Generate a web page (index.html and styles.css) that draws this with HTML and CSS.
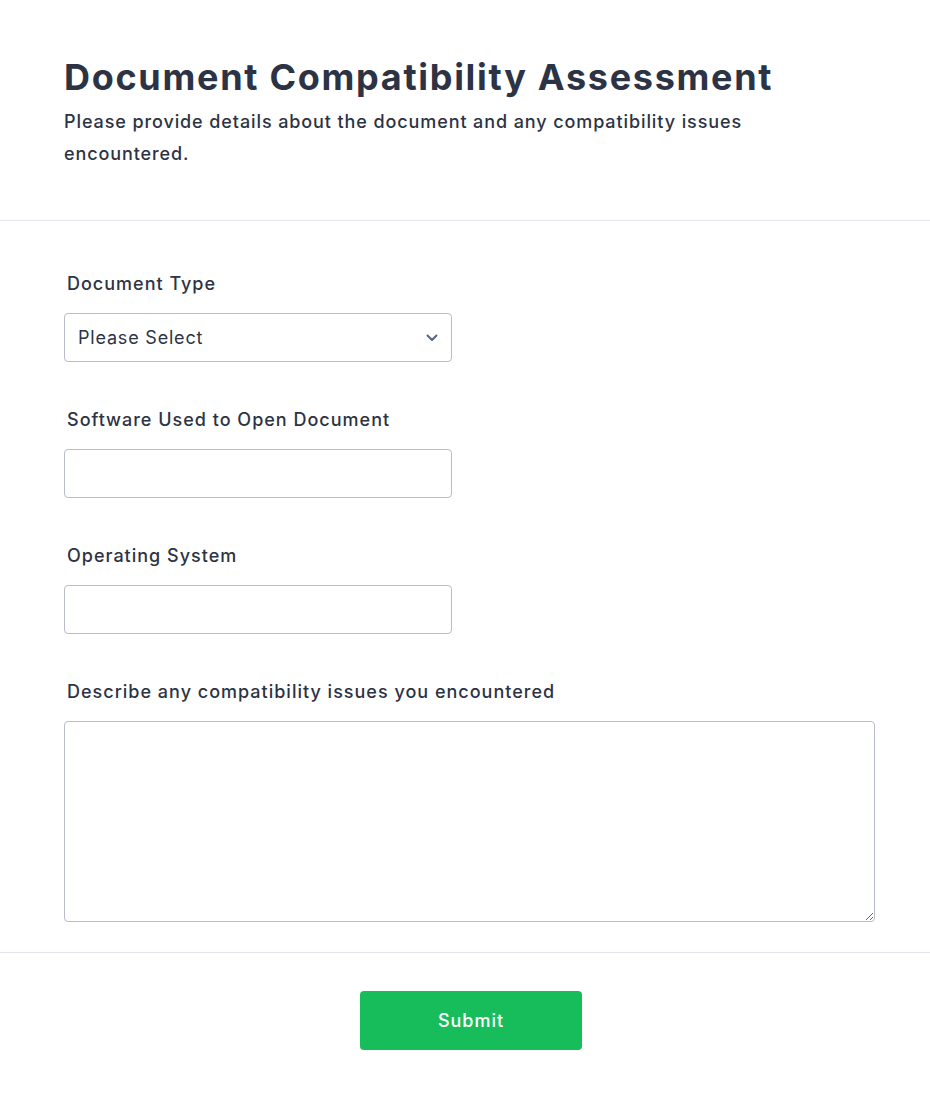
FILE: index.html
```html
<!DOCTYPE html>
<html lang="en">
<head>
<meta charset="UTF-8">
<meta name="viewport" content="width=device-width, initial-scale=1.0">
<title>Document Compatibility Assessment</title>
<link rel="stylesheet" href="styles.css">
</head>
<body>
<header class="form-header">
<h1>Document Compatibility Assessment</h1>
<p>Please provide details about the document and any compatibility issues encountered.</p>
</header>
<form class="form-body" onsubmit="event.preventDefault();">
<div class="field">
<label for="docType">Document Type</label>
<div class="select-wrap">
<select id="docType">
<option>Please Select</option>
<option>Word Document</option>
<option>PDF</option>
<option>Spreadsheet</option>
<option>Presentation</option>
</select>
<svg class="chevron" width="12" height="8" viewBox="0 0 12 8"><path d="M1.5 1.5 6 6l4.5-4.5" fill="none" stroke="#57647e" stroke-width="2" stroke-linecap="round" stroke-linejoin="round"/></svg>
</div>
</div>
<div class="field">
<label for="software">Software Used to Open Document</label>
<input type="text" id="software">
</div>
<div class="field">
<label for="os">Operating System</label>
<input type="text" id="os">
</div>
<div class="field wide">
<label for="issues">Describe any compatibility issues you encountered</label>
<textarea id="issues"></textarea>
</div>
</form>
<footer class="form-footer">
<button type="submit">Submit</button>
</footer>
</body>
</html>
```

FILE: styles.css
```css
body {
margin: 0;
padding: 0;
font-family: Inter, "Noto Sans", sans-serif;
color: #2c3345;
background: #fff;
}

.form-header {
padding: 56px 64px 50px;
border-bottom: 1px solid #e3e5ec;
}

.form-header h1 {
margin: 0;
font-size: 36px;
font-weight: 700;
line-height: 43px;
letter-spacing: 1.7px;
}

.form-header p {
margin: 7px 0 0;
max-width: 760px;
font-size: 18px;
font-weight: 500;
line-height: 32px;
letter-spacing: 0.9px;
}

.form-body {
padding: 51px 55px 30px 64px;
border-bottom: 1px solid #e3e5ec;
display: flex;
flex-direction: column;
gap: 46px;
}

.field {
display: flex;
flex-direction: column;
gap: 17px;
width: 388px;
}

.field.wide {
width: auto;
}

label {
padding-left: 3px;
font-size: 18px;
font-weight: 500;
line-height: 24px;
letter-spacing: 1px;
}

input, select, textarea {
box-sizing: border-box;
width: 100%;
border: 1px solid #b8bdc9;
border-radius: 4px;
background: #fff;
font-family: inherit;
font-size: 18px;
letter-spacing: 0.8px;
color: #2c3345;
}

input, select {
height: 49px;
padding: 0 13px;
}

select {
appearance: none;
}

.select-wrap {
position: relative;
}

.chevron {
position: absolute;
right: 14px;
top: 21px;
pointer-events: none;
}

textarea {
height: 201px;
padding: 10px 13px;
}

.form-footer {
display: flex;
justify-content: center;
padding: 38px 0 49px 12px;
}

button {
width: 222px;
height: 59px;
border: none;
border-radius: 4px;
background: #18bd5b;
color: #fff;
font-family: inherit;
font-size: 18px;
font-weight: 500;
letter-spacing: 1px;
cursor: pointer;
}
```
